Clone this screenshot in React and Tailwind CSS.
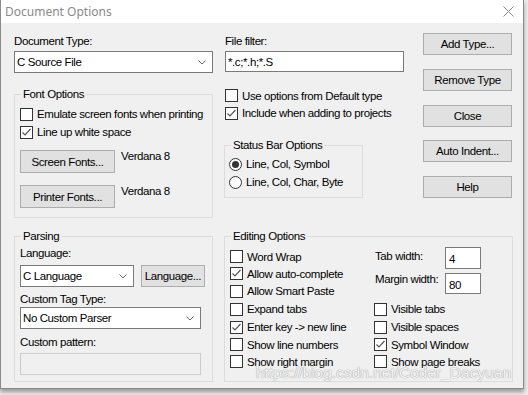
import React from 'react'

const font = { fontFamily: '"Liberation Sans", Arial, sans-serif', letterSpacing: '-0.4px' }

function Check({ checked }) {
  return (
    <span className="w-[13px] h-[13px] shrink-0 border border-[#333] bg-white flex items-center justify-center">
      {checked && (
        <svg width="11" height="11" viewBox="0 0 11 11">
          <polyline points="1.5,5.5 4,8 9.5,2" fill="none" stroke="#555" strokeWidth="1.2" />
        </svg>
      )}
    </span>
  )
}

function CheckRow({ label, checked, h = 'h-[17px]' }) {
  return (
    <div className={`flex items-center gap-[4px] ${h}`}>
      <Check checked={checked} />
      <span className="leading-[14px] whitespace-nowrap">{label}</span>
    </div>
  )
}

function Radio({ label, checked }) {
  return (
    <div className="flex items-center gap-[4px] h-[18px]">
      <span className="w-[13px] h-[13px] rounded-full border border-[#333] bg-white flex items-center justify-center">
        {checked && <span className="w-[7px] h-[7px] rounded-full bg-[#333]" />}
      </span>
      <span className="leading-[14px] whitespace-nowrap">{label}</span>
    </div>
  )
}

function Btn({ children, className = '' }) {
  return (
    <div className={`h-[22px] bg-[#e1e1e1] border border-[#adadad] flex items-center justify-center leading-[14px] whitespace-nowrap ${className}`}>
      {children}
    </div>
  )
}

function Select({ value, className = '' }) {
  return (
    <div className={`h-[22px] bg-white border border-[#7a7a7a] flex items-center justify-between pl-[2px] pr-[6px] ${className}`}>
      <span className="leading-[14px]">{value}</span>
      <svg width="8" height="5" viewBox="0 0 8 5">
        <polyline points="0.5,0.5 4,4 7.5,0.5" fill="none" stroke="#666" strokeWidth="1" />
      </svg>
    </div>
  )
}

function Group({ title, className = '', children }) {
  return (
    <div className={`relative border border-[#dcdcdc] ${className}`}>
      <span className="absolute -top-[8px] left-[6px] bg-[#f0f0f0] px-[2px] leading-[14px]">{title}</span>
      {children}
    </div>
  )
}

export default function App() {
  return (
    <div className="w-[528px] h-[395px] bg-[#ececec] overflow-hidden text-[11.5px] text-black" style={font}>
      <div className="relative w-[524px] h-[389px] bg-[#f0f0f0] border border-[#8a8a8a] border-t-0 flex flex-col shadow-[0_3px_4px_rgba(0,0,0,0.35)]">
        <div className="h-[23px] bg-white flex items-center justify-between pl-[4px] pr-[9px] shrink-0">
          <span className="text-[#8a8a8a] text-[12px] tracking-normal" style={{ fontFamily: '"Noto Sans", "Open Sans", sans-serif' }}>Document Options</span>
          <svg width="11" height="11" viewBox="0 0 11 11">
            <path d="M0.5 0.5 L10.5 10.5 M10.5 0.5 L0.5 10.5" stroke="#8a8a8a" strokeWidth="1" />
          </svg>
        </div>

        <div className="flex h-[213px] pl-[13px]">
          <div className="w-[199px] flex flex-col">
            <div className="mt-[11px] leading-[14px]">Document Type:</div>
            <Select value="C Source File" className="mt-[3px] h-[21px]" />
            <Group title="Font Options" className="mt-[21px] h-[124px] pl-[5px] pt-[10px]">
              <CheckRow label="Emulate screen fonts when printing" h="h-[18px]" />
              <CheckRow label="Line up white space" checked h="h-[18px]" />
              <div className="flex items-start mt-[9px]">
                <Btn className="w-[95px] h-[23px]">Screen Fonts...</Btn>
                <span className="ml-[6px] -mt-[1px] leading-[14px]">Verdana 8</span>
              </div>
              <div className="flex items-start mt-[12px]">
                <Btn className="w-[95px] h-[23px]">Printer Fonts...</Btn>
                <span className="ml-[6px] -mt-[1px] leading-[14px]">Verdana 8</span>
              </div>
            </Group>
          </div>

          <div className="w-[180px] ml-[11px] flex flex-col">
            <div className="mt-[11px] ml-[1px] leading-[14px]">File filter:</div>
            <div className="mt-[3px] ml-[1px] h-[21px] bg-white border border-[#7a7a7a] flex items-center pl-[2px] leading-[14px]">*.c;*.h;*.S</div>
            <div className="mt-[15px] ml-[1px]">
              <CheckRow label="Use options from Default type" />
              <CheckRow label="Include when adding to projects" checked h="h-[18px]" />
            </div>
            <Group title="Status Bar Options" className="mt-[23px] w-[139px] h-[53px] pl-[4px] pt-[9px]">
              <Radio label="Line, Col, Symbol" checked />
              <Radio label="Line, Col, Char, Byte" />
            </Group>
          </div>

          <div className="w-[89px] ml-[19px] flex flex-col pt-[10px] gap-[14px]">
            <Btn>Add Type...</Btn>
            <Btn>Remove Type</Btn>
            <Btn>Close</Btn>
            <Btn className="-mt-[1px]">Auto Indent...</Btn>
            <Btn>Help</Btn>
          </div>
        </div>

        <div className="flex pl-[13px]">
          <Group title="Parsing" className="w-[199px] h-[146px] pl-[5px] pt-[9px]">
            <div className="leading-[14px]">Language:</div>
            <div className="flex mt-[5px]">
              <Select value="C Language" className="w-[114px]" />
              <Btn className="w-[64px] ml-[7px] border-[#9a9a9a]">Language...</Btn>
            </div>
            <div className="mt-[5px] leading-[14px]">Custom Tag Type:</div>
            <Select value="No Custom Parser" className="mt-[1px] w-[181px]" />
            <div className="mt-[6px] leading-[14px]">Custom pattern:</div>
            <div className="mt-[4px] w-[181px] h-[22px] border border-[#cccccc] bg-[#f0f0f0]" />
          </Group>

          <Group title="Editing Options" className="ml-[11px] w-[289px] h-[146px] flex pl-[5px]">
            <div className="w-[144px] pt-[11px]">
              <CheckRow label="Word Wrap" />
              <CheckRow label="Allow auto-complete" checked />
              <CheckRow label="Allow Smart Paste" h="h-[18px]" />
              <CheckRow label="Expand tabs" h="h-[18px]" />
              <CheckRow label="Enter key -> new line" checked h="h-[18px]" />
              <CheckRow label="Show line numbers" />
              <CheckRow label="Show right margin" />
            </div>
            <div className="flex flex-col">
              <div className="flex items-start mt-[10px]">
                <span className="w-[71px] pl-[1px] pt-[2px] leading-[14px] whitespace-nowrap">Tab width:</span>
                <div className="w-[36px] h-[22px] bg-white border border-[#7a7a7a] pl-[3px] pt-[4px] leading-[14px]">4</div>
              </div>
              <div className="flex items-start mt-[4px]">
                <span className="w-[71px] pl-[1px] -mt-[1px] leading-[14px] whitespace-nowrap">Margin width:</span>
                <div className="w-[36px] h-[21px] bg-white border border-[#7a7a7a] pl-[3px] pt-[4px] leading-[14px]">80</div>
              </div>
              <div className="mt-[6px]">
                <CheckRow label="Visible tabs" h="h-[18px]" />
                <CheckRow label="Visible spaces" h="h-[18px]" />
                <CheckRow label="Symbol Window" checked />
                <CheckRow label="Show page breaks" />
              </div>
            </div>
          </Group>
        </div>

        <span
          className="absolute left-[255px] top-[363px] text-[15.5px] leading-[20px] tracking-normal text-white/90 whitespace-nowrap"
          style={{ fontFamily: '"Liberation Sans", sans-serif', textShadow: '0 0 1px #9a9a9a, 0 0 1px #9a9a9a' }}
        >
          https://blog.csdn.net/Coder_Dacyuan
        </span>
      </div>
    </div>
  )
}
